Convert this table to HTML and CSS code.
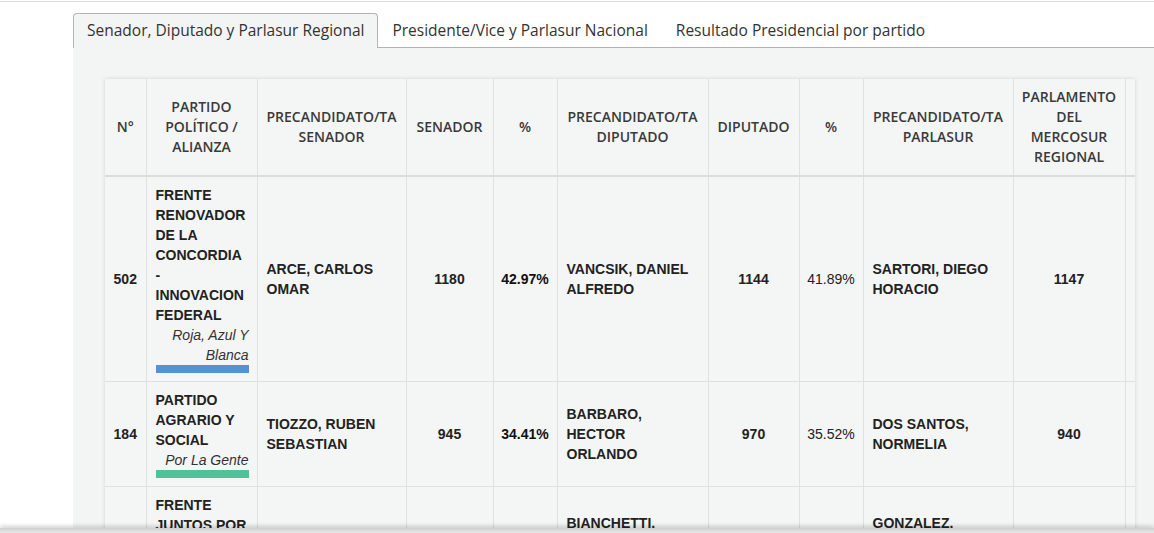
FILE: index.html
```html
<!DOCTYPE html>
<html lang="es">
<head>
<meta charset="utf-8">
<title>Resultados</title>
<link rel="stylesheet" href="styles.css">
</head>
<body>
<div class="topline"></div>
<div class="page">
  <ul class="tabs">
    <li class="tab active">Senador, Diputado y Parlasur Regional</li>
    <li class="tab">Presidente/Vice y Parlasur Nacional</li>
    <li class="tab">Resultado Presidencial por partido</li>
  </ul>
  <div class="panel">
    <div class="card">
      <table class="results">
        <colgroup>
          <col class="c-num"><col class="c-party"><col class="c-name"><col class="c-votes"><col class="c-pct">
          <col class="c-name2"><col class="c-votes2"><col class="c-pct"><col class="c-name3"><col class="c-parl"><col class="c-last">
        </colgroup>
        <thead>
          <tr>
            <th>N°</th>
            <th>PARTIDO POLÍTICO / ALIANZA</th>
            <th>PRECANDIDATO/TA SENADOR</th>
            <th>SENADOR</th>
            <th>%</th>
            <th>PRECANDIDATO/TA DIPUTADO</th>
            <th>DIPUTADO</th>
            <th>%</th>
            <th>PRECANDIDATO/TA PARLASUR</th>
            <th>PARLAMENTO DEL MERCOSUR REGIONAL</th>
            <th>%</th>
          </tr>
        </thead>
        <tbody>
          <tr>
            <td class="num">502</td>
            <td class="party">FRENTE RENOVADOR DE LA CONCORDIA - INNOVACION FEDERAL<div class="list">Roja, Azul Y Blanca</div><div class="bar bar-blue"></div></td>
            <td class="name">ARCE, CARLOS OMAR</td>
            <td class="num">1180</td>
            <td class="num strong">42.97%</td>
            <td class="name">VANCSIK, DANIEL ALFREDO</td>
            <td class="num">1144</td>
            <td class="num plain">41.89%</td>
            <td class="name">SARTORI, DIEGO HORACIO</td>
            <td class="num">1147</td>
            <td class="num plain">41.96%</td>
          </tr>
          <tr>
            <td class="num">184</td>
            <td class="party">PARTIDO AGRARIO Y SOCIAL<div class="list">Por La Gente</div><div class="bar bar-green"></div></td>
            <td class="name">TIOZZO, RUBEN SEBASTIAN</td>
            <td class="num">945</td>
            <td class="num strong">34.41%</td>
            <td class="name">BARBARO, HECTOR ORLANDO</td>
            <td class="num">970</td>
            <td class="num plain">35.52%</td>
            <td class="name">DOS SANTOS, NORMELIA</td>
            <td class="num">940</td>
            <td class="num plain">34.39%</td>
          </tr>
          <tr>
            <td class="num">503</td>
            <td class="party">FRENTE JUNTOS POR ENTRE RIOS<div class="list">Celeste Y Blanca</div><div class="bar bar-sky"></div></td>
            <td class="name">MANCINI, JUAN</td>
            <td class="num">621</td>
            <td class="num strong">22.62%</td>
            <td class="name two-line">BIANCHETTI, JORGE LUIS</td>
            <td class="num">617</td>
            <td class="num plain">22.59%</td>
            <td class="name two-line">GONZALEZ, MARIA ESTER</td>
            <td class="num">646</td>
            <td class="num plain">23.64%</td>
          </tr>
        </tbody>
      </table>
    </div>
  </div>
</div>
<div class="footer-edge"></div>
</body>
</html>
```

FILE: styles.css
```css
html, body {
  margin: 0;
  padding: 0;
  background: #ffffff;
  overflow: hidden;
}

body {
  width: 1154px;
  height: 533px;
  font-family: "Open Sans", "Noto Sans", sans-serif;
  color: #333;
}

.topline {
  height: 1px;
  border-bottom: 1px solid #dcdcdc;
}

.page {
  margin-left: 73px;
  margin-top: 11px;
  width: 1094px;
}

.tabs {
  list-style: none;
  margin: 0;
  padding: 0;
  display: flex;
  border-bottom: 1px solid #b4b4b4;
}

.tab {
  padding: 7px 13px 8px;
  font-size: 15.5px;
  line-height: 18px;
  color: #333;
  border: 1px solid transparent;
  border-bottom: none;
  margin-bottom: -1px;
  white-space: nowrap;
}

.tab.active {
  background: #f3f4f4;
  border-color: #b4b4b4;
  border-radius: 4px 4px 0 0;
  padding-bottom: 9px;
}

.panel {
  background: #f3f4f4;
  padding: 31px 32px 0;
  height: 520px;
}

.card {
  width: 1030px;
  overflow: hidden;
  box-shadow: 0 0 4px rgba(0, 0, 0, 0.14);
  background: #f4f5f5;
}

.results {
  border-collapse: collapse;
  table-layout: fixed;
  width: 1110px;
  background: #f4f5f5;
}

.c-num { width: 41px; }
.c-party { width: 111px; }
.c-name { width: 149px; }
.c-votes { width: 87px; }
.c-pct { width: 64px; }
.c-name2 { width: 151px; }
.c-votes2 { width: 91px; }
.c-name3 { width: 150px; }
.c-parl { width: 112px; }
.c-last { width: 90px; }

.results th {
  font-family: "Open Sans", "Noto Sans", sans-serif;
  font-weight: 600;
  font-size: 14px;
  line-height: 20px;
  color: #3a3a3a;
  text-align: center;
  vertical-align: middle;
  padding: 8px 4px 8px;
  border-left: 1px solid #e0e0e0;
  border-right: 1px solid #e0e0e0;
  border-bottom: 2px solid #dcdcdc;
}

.results th:first-child,
.results td:first-child {
  border-left: none;
}

.results td {
  font-family: "Liberation Sans", Arial, sans-serif;
  font-weight: bold;
  font-size: 14px;
  line-height: 20px;
  color: #222;
  padding: 8px 10px 8px 9px;
  vertical-align: middle;
  border: 1px solid #e0e0e0;
}

.results tbody tr:first-child td {
  border-top: none;
}

.results td.two-line {
  vertical-align: top;
  padding-top: 26px;
}

.results td.num {
  text-align: center;
  padding-left: 4px;
  padding-right: 4px;
}

.results td.strong {
  color: #111;
}

.results td.plain {
  font-weight: normal;
  color: #222;
}

.results td.name {
  text-align: left;
}

.results td.party {
  text-align: left;
  padding-right: 8px;
}

.list {
  font-weight: normal;
  font-style: italic;
  text-align: right;
  color: #333;
}

.bar {
  height: 8px;
}

.bar-blue { background: #5592d4; }
.bar-green { background: #4fc29a; }
.bar-sky { background: #7fc3e8; }

.footer-edge {
  position: fixed;
  left: 0;
  right: 0;
  bottom: 0;
  height: 5px;
  background: linear-gradient(to bottom, #cfcfcf, #e8e8e8);
  box-shadow: 0 -2px 4px rgba(0, 0, 0, 0.18);
}
```
